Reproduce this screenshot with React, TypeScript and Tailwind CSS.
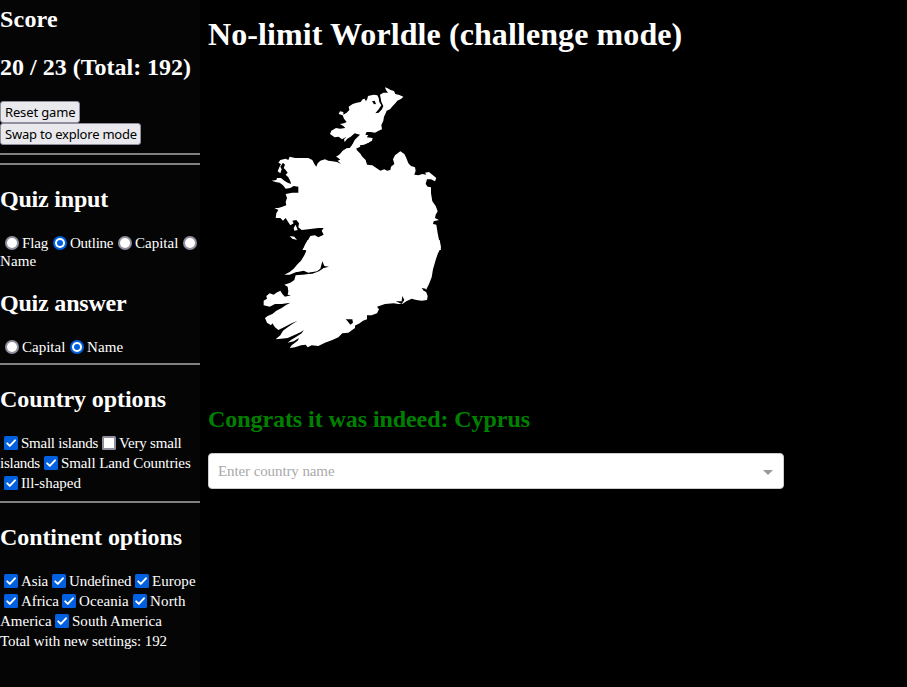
import type { ReactNode } from "react";

const serif = "font-['Liberation_Serif','Times_New_Roman',serif]";

function Radio({ on = false }: { on?: boolean }) {
  return (
    <svg viewBox="0 0 14 14" className="h-[14px] w-[14px] shrink-0" role="radio" aria-checked={on}>
      <circle cx="7" cy="7" r="7" fill={on ? "#0060df" : "#8f8f9d"} />
      <circle cx="7" cy="7" r="5" fill="#fff" />
      {on && <circle cx="7" cy="7" r="3" fill="#0060df" />}
    </svg>
  );
}

function Check({ on = true }: { on?: boolean }) {
  return (
    <svg viewBox="0 0 14 14" className="h-[14px] w-[14px] shrink-0" role="checkbox" aria-checked={on}>
      <rect width="14" height="14" rx="1.5" fill={on ? "#0060df" : "#8f8f9d"} />
      {on ? (
        <path d="M3.2 7.3 5.8 9.9 11 4.3" fill="none" stroke="#fff" strokeWidth="1.9" strokeLinecap="round" strokeLinejoin="round" />
      ) : (
        <rect x="2" y="2" width="10" height="10" fill="#fff" />
      )}
    </svg>
  );
}

function Heading({ children, className }: { children: ReactNode; className: string }) {
  return <h2 className={`h-7 text-2xl leading-7 font-bold whitespace-nowrap ${className}`}>{children}</h2>;
}

function Rule({ className }: { className: string }) {
  return <hr className={`h-[2px] border-0 bg-[#808080] ${className}`} />;
}

function Line({ children, className = "h-5" }: { children: ReactNode; className?: string }) {
  return <div className={`flex items-center whitespace-nowrap ${className}`}>{children}</div>;
}

function Ireland() {
  return (
    <svg viewBox="208 80 240 280" className="block h-[280px] w-[240px]" fill="#fff">
      <g transform="translate(320 80) scale(.33333)">
        <path d="M195 22 203 25 212 30 222 33 226 42 238 45 250 50 244 56 232 62 226 70 218 78 210 88 200 92 197 100 192 110 190 122 184 135 186 148 176 152 165 158 152 156 140 156 136 164 145 166 140 172 158 174 156 182 145 188 132 194 120 196 108 202 110 210 122 222 130 240 62 240 50 230 60 222 68 212 80 205 92 204 98 192 104 180 112 172 120 164 104 160 92 170 82 176 74 186 72 178 80 170 66 178 56 170 44 172 30 162 34 152 48 144 60 146 76 144 70 138 60 132 72 130 80 126 72 116 68 106 56 102 60 94 70 96 70 104 80 98 88 90 86 80 98 72 110 68 122 66 128 58 134 56 138 64 142 56 144 48 154 46 162 44 172 46 176 54 178 66 184 76 176 88 166 100 176 98 186 88 190 78 184 66 182 54 180 44 190 38 204 38 198 30Z" />
        <path fill="#000" d="M156 64 164 62 168 72 162 73Z" />
      </g>
      <g transform="translate(255 140) scale(.33333)">
        <path d="M300 20 280 34 262 42 242 50 250 52 258 58 248 62 258 72 246 66 232 64 220 62 210 58 196 62 188 70 184 80 178 72 172 60 160 54 140 54 120 54 104 50 100 60 92 56 76 60 70 68 78 72 72 84 68 94 76 100 80 88 76 80 84 68 90 74 86 84 92 90 98 98 92 104 100 112 106 124 108 132 98 128 88 122 78 114 66 114 64 120 50 122 62 126 74 128 84 136 92 146 106 144 116 138 130 140 130 158 112 158 92 162 96 174 92 186 94 196 82 200 70 204 58 204 70 210 64 220 62 234 76 234 84 242 92 234 98 244 106 256 116 250 112 242 124 240 132 250 130 262 140 270 160 268 190 264 206 264 200 272 206 284 190 292 180 286 166 288 158 302 150 316 142 330 300 330Z" />
        <path d="M104 288 118 290 126 300 112 296ZM116 264 122 254 128 270 118 272Z" />
      </g>
      <g transform="translate(345 140) scale(.33333)">
        <path d="M0 28 14 24 22 14 34 4 44 0 78 0 70 8 56 12 44 14 46 20 32 26 40 38 52 50 62 60 66 74 82 76 94 84 106 92 118 88 126 92 136 90 138 80 148 72 144 58 150 46 158 40 166 34 178 42 184 54 190 70 198 78 210 82 212 92 208 104 220 106 232 102 244 104 240 98 252 96 262 104 274 114 270 124 258 118 246 118 242 132 248 140 258 142 258 160 262 184 272 198 278 214 272 224 270 234 282 240 266 244 264 252 274 254 278 280 284 310 288 330 0 330Z" />
      </g>
      <g transform="translate(255 240) scale(.33333)">
        <path d="M158 0 150 14 146 26 154 32 148 46 138 62 128 72 116 86 104 96 88 104 104 104 124 96 140 98 160 100 174 96 160 102 140 104 122 106 118 120 106 128 88 134 98 140 100 154 98 164 108 166 90 170 82 162 76 152 64 158 56 164 44 160 34 168 36 176 26 182 26 196 44 200 60 192 80 192 106 188 92 196 80 204 64 212 52 222 38 228 30 234 36 248 48 256 52 250 60 262 70 270 90 260 110 250 128 242 112 252 98 262 84 272 76 286 62 298 78 296 98 294 120 284 138 276 146 270 140 280 124 290 108 300 98 308 116 304 132 294 128 302 110 316 104 324 120 322 138 316 152 314 158 322 170 316 190 318 210 308 232 300 250 292 262 280 280 278 300 264 300 0Z" />
        <path fill="#000" d="M124 97 146 92 160 98 186 94 196 86 202 64 208 78 222 80 206 84 192 94 172 101 146 103 124 102Z" />
      </g>
      <g transform="translate(345 240) scale(.33333)">
        <path d="M0 275 12 268 16 258 28 258 44 250 54 242 66 238 66 226 80 226 96 220 102 208 96 200 120 192 146 190 160 192 172 192 184 184 200 176 214 180 230 182 246 180 248 168 242 152 252 132 260 112 264 88 272 60 278 42 288 22 284 0 0 0Z" />
        <path fill="#000" d="M2 238 22 238 24 248 16 254 8 244ZM172 168 178 180 170 192 152 184 170 184ZM230 144 242 146 244 156 236 152Z" />
      </g>
    </svg>
  );
}

const button =
  "block h-[22px] rounded-[3px] border border-[#8f8f9d] bg-[#e9e9ed] pl-1 text-left font-['Noto_Sans',sans-serif] text-[13px] leading-[20px] whitespace-nowrap text-black";

export default function App() {
  return (
    <div className={`flex h-[687px] w-full overflow-hidden bg-black text-white ${serif}`}>
      <aside className="h-full w-[200px] shrink-0 bg-[#050505] text-[15px] leading-5 tracking-[-0.1px]">
        <Heading className="mt-[5px] tracking-[0.2px]">Score</Heading>
        <Heading className="mt-5 tracking-[0px]">20 / 23 (Total: 192)</Heading>
        <button className={`mt-5 w-20 tracking-[-0.15px] ${button}`}>Reset game</button>
        <button className={`w-[141px] tracking-[-0.22px] ${button}`}>Swap to explore mode</button>
        <Rule className="mt-2" />
        <Rule className="mt-2" />

        <Heading className="mt-5 tracking-[-0.2px]">Quiz input</Heading>
        <Line className="mt-[21px] h-[18px] pl-[5px]">
          <Radio />
          <span className="w-[34px] pl-[3px]">Flag</span>
          <Radio on />
          <span className="w-[51px] pl-[3px] tracking-[-0.25px]">Outline</span>
          <Radio />
          <span className="w-[51px] pl-[3px] tracking-[0px]">Capital</span>
          <Radio />
        </Line>
        <Line className="h-[18px] tracking-[0.15px]">Name</Line>

        <Heading className="mt-[19px] tracking-[-0.2px]">Quiz answer</Heading>
        <Line className="mt-[21px] h-[18px] pl-[5px]">
          <Radio />
          <span className="w-[51px] pl-[3px] tracking-[0px]">Capital</span>
          <Radio on />
          <span className="pl-[3px] tracking-[0.15px]">Name</span>
        </Line>
        <Rule className="mt-[7px]" />

        <Heading className="mt-5 tracking-[-0.1px]">Country options</Heading>
        <Line className="mt-5 h-5 pl-1">
          <Check />
          <span className="w-[84px] pl-[3px] tracking-[-0.25px]">Small islands</span>
          <Check on={false} />
          <span className="pl-[3px] tracking-[-0.2px]">Very small</span>
        </Line>
        <Line>
          <span className="w-11 tracking-[-0.25px]">islands</span>
          <Check />
          <span className="pl-[3px]">Small Land Countries</span>
        </Line>
        <Line className="h-5 pl-1">
          <Check />
          <span className="pl-[3px] tracking-[0px]">Ill-shaped</span>
        </Line>
        <Rule className="mt-2" />

        <Heading className="mt-5 tracking-[-0.08px]">Continent options</Heading>
        <Line className="mt-5 h-5 pl-1">
          <Check />
          <span className="w-[34px] pl-[3px]">Asia</span>
          <Check />
          <span className="w-[69px] pl-[3px]">Undefined</span>
          <Check />
          <span className="pl-[3px] tracking-[0.05px]">Europe</span>
        </Line>
        <Line className="h-5 pl-1">
          <Check />
          <span className="w-11 pl-[3px]">Africa</span>
          <Check />
          <span className="w-[57px] pl-[3px] tracking-[0.1px]">Oceania</span>
          <Check />
          <span className="pl-[3px] tracking-[0.15px]">North</span>
        </Line>
        <Line>
          <span className="w-[55px] tracking-[0px]">America</span>
          <Check />
          <span className="pl-[3px] tracking-[0.03px]">South America</span>
        </Line>
        <Line>Total with new settings: 192</Line>
      </aside>

      <main className="min-w-0 flex-1 pl-2">
        <h1 className="mt-4 h-9 text-[32px] leading-9 font-bold tracking-[0.09px] whitespace-nowrap">No-limit Worldle (challenge mode)</h1>
        <div className="mt-7">
          <Ireland />
        </div>
        <Heading className="mt-[45px] tracking-[-0.07px] text-[#008000]">Congrats it was indeed: Cyprus</Heading>
        <div className="mt-5 flex h-9 w-[576px] items-center justify-between rounded-[4px] border border-[#ccc] bg-white pr-[10px] pl-[9px]">
          <span className="text-[15px] leading-5 tracking-[-0.1px] text-[#aaa]">Enter country name</span>
          <svg viewBox="0 0 10 5" className="mt-[2px] h-[5px] w-[10px]">
            <path d="M0 0H10L5 5Z" fill="#999" />
          </svg>
        </div>
      </main>
    </div>
  );
}
